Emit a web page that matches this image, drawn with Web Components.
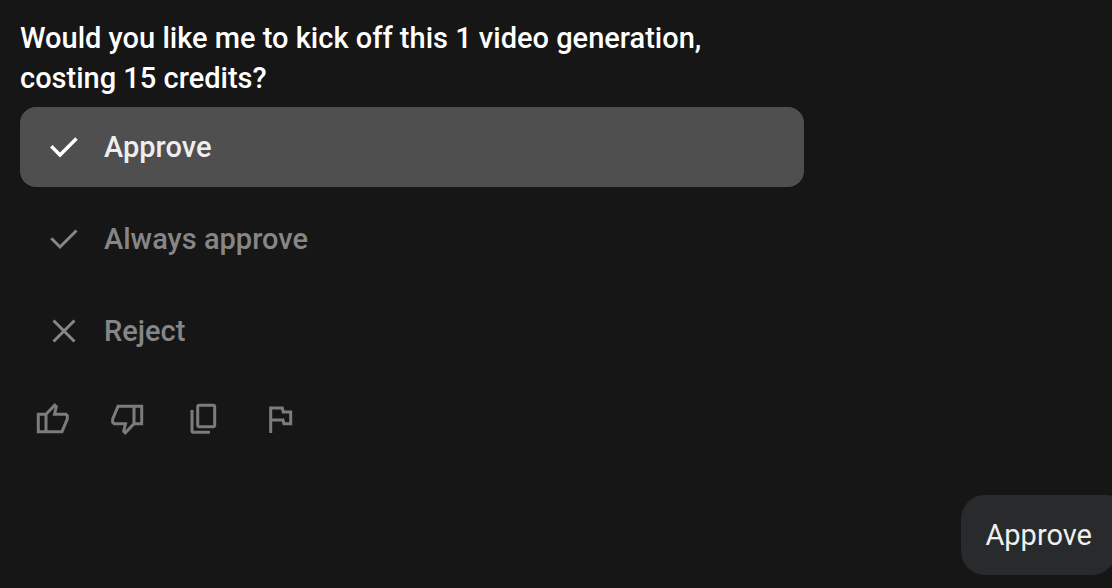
<!DOCTYPE html>
<html lang="en">
<head>
<meta charset="utf-8">
<meta name="viewport" content="width=device-width, initial-scale=1">
<title>Approve video generation</title>
<style>
  body { margin: 0; background: #161616; color: #fff; font-family: "Google Sans", Roboto, "Open Sans", sans-serif; font-size: 29px; line-height: 40px; overflow-x: hidden; }
</style>
</head>
<body>
<chat-thread>
  <approval-prompt>
    <span slot="question">Would you like me to kick off this 1 video generation, costing 15 credits?</span>
    <choice-option icon="check" selected>Approve</choice-option>
    <choice-option icon="check">Always approve</choice-option>
    <choice-option icon="close">Reject</choice-option>
  </approval-prompt>
  <feedback-bar></feedback-bar>
  <user-message>Approve</user-message>
</chat-thread>
<script>
const ICONS = {
  check: '<svg viewBox="0 0 32 32"><path d="M3.3 15.3 12 24 28.5 7.5"/></svg>',
  close: '<svg viewBox="0 0 32 32"><path d="M5.5 5.5l21 21M26.5 5.5l-21 21"/></svg>',
  up: '<svg viewBox="0 0 36 36"><path d="M4.3 13.2H12L20.7 4.2 22.3 5.8 20.5 13.2H31.8L33.3 14.7V18L28 30.7H4.3ZM12 13.2V30.7"/></svg>',
  down: '<svg viewBox="0 0 36 36"><path d="M31.7 22.8H24L15.3 31.8 13.7 30.2 15.5 22.8H4.2L2.7 21.3V18L8 5.3H31.7ZM24 22.8V5.3"/></svg>',
  copy: '<svg viewBox="0 0 36 36"><rect x="11.7" y="4.3" width="17" height="21.4" rx="1.6"/><path d="M6 9V29.8Q6 31.3 7.5 31.3H24"/></svg>',
  flag: '<svg viewBox="0 0 36 36"><path d="M8.7 32V7H20.3L21.3 11H28.7V22.7H22L21 19H8.7"/></svg>'
};

class Base extends HTMLElement {
  constructor() { super(); this.attachShadow({ mode: 'open' }); }
  connectedCallback() { this.shadowRoot.innerHTML = this.render(); }
}

customElements.define('chat-thread', class extends Base {
  render() {
    return `<style>
      :host { display: flex; flex-direction: column; padding: 18px 0 12px 20px; }
    </style><slot></slot>`;
  }
});

customElements.define('approval-prompt', class extends Base {
  render() {
    return `<style>
      :host { display: block; max-width: 784px; }
      p { margin: 0 80px 9px 0; font-weight: 500; }
      .options { display: flex; flex-direction: column; gap: 12px; }
    </style>
    <p id="q"><slot name="question"></slot></p>
    <div class="options" role="group" aria-labelledby="q"><slot></slot></div>`;
  }
});

customElements.define('choice-option', class extends Base {
  render() {
    return `<style>
      :host { display: block; color: #868686; }
      :host([selected]) { color: #eee; }
      button { display: flex; align-items: center; gap: 24px; width: 100%; height: 80px; padding: 0 28px; border: 0; border-radius: 16px; background: none; color: inherit; font: inherit; font-weight: 500; text-align: left; cursor: pointer; }
      :host([selected]) button { background: #4f4f4f; }
      svg { display: block; width: 32px; height: 32px; fill: none; stroke: currentColor; stroke-width: 3; }
      :host([selected]) svg { stroke: #fff; stroke-width: 3.4; }
    </style>
    <button type="button" aria-pressed="${this.hasAttribute('selected')}">${ICONS[this.getAttribute('icon')]}<slot></slot></button>`;
  }
});

customElements.define('feedback-bar', class extends Base {
  render() {
    const button = (icon, label) => `<button type="button" aria-label="${label}">${ICONS[icon]}</button>`;
    return `<style>
      :host { display: flex; gap: 40px; margin: 30px 0 58px; padding-left: 14px; color: #7c7c7c; }
      button { padding: 0; border: 0; background: none; color: inherit; cursor: pointer; }
      svg { display: block; width: 36px; height: 36px; fill: none; stroke: currentColor; stroke-width: 3; }
    </style>${button('up', 'Good response')}${button('down', 'Bad response')}${button('copy', 'Copy')}${button('flag', 'Report')}`;
  }
});

customElements.define('user-message', class extends Base {
  render() {
    return `<style>
      :host { display: block; align-self: flex-end; margin-right: -4px; padding: 20px 24px; border-radius: 24px 8px 24px 24px; background: #282a2c; color: #f0f0f0; }
    </style><slot></slot>`;
  }
});
</script>
</body>
</html>
